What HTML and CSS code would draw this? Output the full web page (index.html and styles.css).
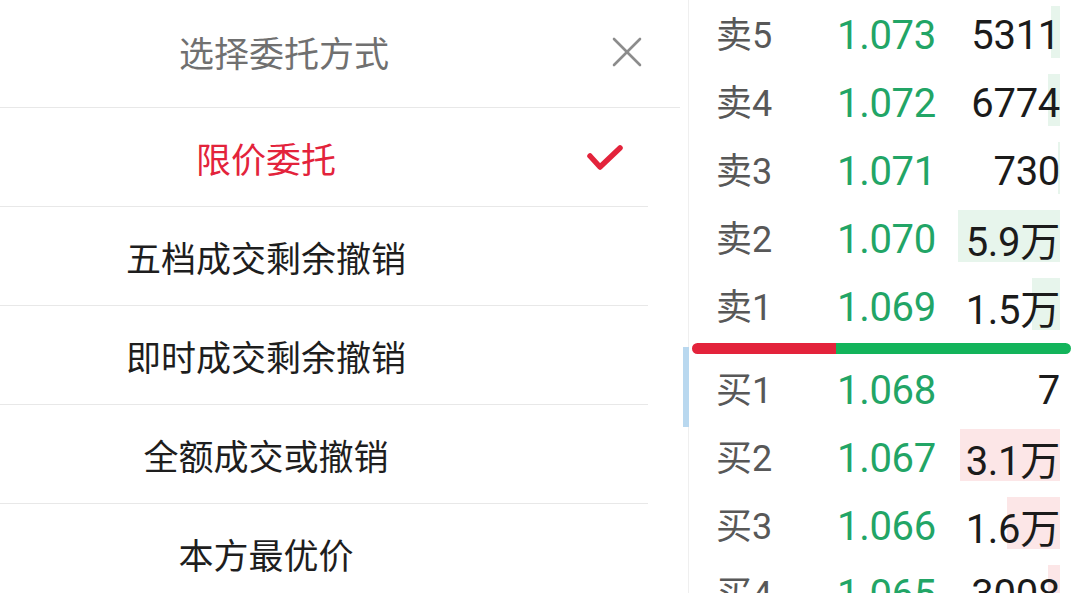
FILE: index.html
```html
<!DOCTYPE html>
<html lang="zh-CN">
<head>
    <meta charset="UTF-8">
    <meta name="viewport" content="width=device-width, initial-scale=1.0">
    <title>选择委托方式</title>
    <link rel="stylesheet" href="styles.css">
</head>
<body>
    <div class="screen">
        <!-- order type picker -->
        <section class="sheet">
            <header class="sheet-head">
                <h2 class="sheet-title">选择委托方式</h2>
                <button class="close-btn" aria-label="关闭">
                    <svg width="30" height="30" viewBox="0 0 30 30" fill="none" stroke="currentColor" stroke-width="2.6" stroke-linecap="round">
                        <line x1="2" y1="2" x2="28" y2="28"></line>
                        <line x1="28" y1="2" x2="2" y2="28"></line>
                    </svg>
                </button>
            </header>
            <ul class="options">
                <li class="option active">
                    <span>限价委托</span>
                    <svg class="check" width="38" height="30" viewBox="0 0 38 30" fill="none" stroke="currentColor" stroke-width="5.5" stroke-linecap="round" stroke-linejoin="round">
                        <polyline points="4,13 14,24 34,5"></polyline>
                    </svg>
                </li>
                <li class="option"><span>五档成交剩余撤销</span></li>
                <li class="option"><span>即时成交剩余撤销</span></li>
                <li class="option"><span>全额成交或撤销</span></li>
                <li class="option"><span>本方最优价</span></li>
            </ul>
        </section>

        <!-- five level quotes -->
        <section class="book">
            <div class="side sell">
                <div class="level"><i class="depth" style="width:9px"></i><span class="lbl">卖5</span><span class="price">1.073</span><span class="vol">5311</span></div>
                <div class="level"><i class="depth" style="width:12px"></i><span class="lbl">卖4</span><span class="price">1.072</span><span class="vol">6774</span></div>
                <div class="level"><i class="depth" style="width:2px"></i><span class="lbl">卖3</span><span class="price">1.071</span><span class="vol">730</span></div>
                <div class="level"><i class="depth" style="width:102px"></i><span class="lbl">卖2</span><span class="price">1.070</span><span class="vol">5.9万</span></div>
                <div class="level"><i class="depth" style="width:28px"></i><span class="lbl">卖1</span><span class="price">1.069</span><span class="vol">1.5万</span></div>
            </div>
            <div class="ratio">
                <div class="ratio-bar">
                    <span class="ratio-sell" style="width:38%"></span>
                    <span class="ratio-buy"></span>
                </div>
            </div>
            <div class="side buy">
                <div class="level"><i class="depth" style="width:0px"></i><span class="lbl">买1</span><span class="price">1.068</span><span class="vol">7</span></div>
                <div class="level"><i class="depth" style="width:100px"></i><span class="lbl">买2</span><span class="price">1.067</span><span class="vol">3.1万</span></div>
                <div class="level"><i class="depth" style="width:53px"></i><span class="lbl">买3</span><span class="price">1.066</span><span class="vol">1.6万</span></div>
                <div class="level"><i class="depth" style="width:12px"></i><span class="lbl">买4</span><span class="price">1.065</span><span class="vol">3008</span></div>
            </div>
            <span class="scroll-hint"></span>
        </section>
    </div>
</body>
</html>
```

FILE: styles.css
```css
:root {
    --red: #e3233b;
    --green: #13b45b;
    --price-green: #22a566;
    --line: #e8e8e8;
}

* {
    margin: 0;
    padding: 0;
    box-sizing: border-box;
}

body {
    font-family: Roboto, "Noto Sans CJK SC", sans-serif;
    background-color: #fff;
    color: #1d1d1d;
}

.screen {
    display: flex;
    width: 1080px;
    height: 593px;
    overflow: hidden;
    background-color: #fff;
}

/* picker */
.sheet {
    flex: none;
    width: 689px;
    border-right: 1px solid #efefef;
    font-family: "Noto Sans CJK SC", sans-serif;
}

.sheet-head {
    display: grid;
    grid-template-columns: 1fr 112px;
    align-items: center;
    width: 680px;
    height: 108px;
    border-bottom: 1px solid var(--line);
}

.sheet-title {
    text-align: center;
    font-size: 35px;
    font-weight: 400;
    color: #707070;
    padding-bottom: 5px;
}

.close-btn {
    justify-self: center;
    margin-left: 6px;
    margin-bottom: 4px;
    border: none;
    background: none;
    color: #8c8c8c;
    display: flex;
}

.options {
    list-style: none;
}

.option {
    display: grid;
    grid-template-columns: 1fr 116px;
    align-items: center;
    width: 648px;
    height: 99px;
    border-bottom: 1px solid var(--line);
    font-size: 35px;
    color: #1e1e1e;
}

.option span {
    grid-column: 1;
    text-align: center;
}

.option.active {
    color: var(--red);
}

.check {
    justify-self: end;
    margin-right: 24px;
    margin-top: 2px;
    color: var(--red);
}

/* quotes */
.book {
    position: relative;
    flex: 1;
    padding-top: 1px;
}

.level {
    position: relative;
    display: grid;
    grid-template-columns: 121px 1fr auto;
    align-items: center;
    height: 68px;
    padding: 0 20px 0 27px;
}

.level span {
    position: relative;
}

.lbl {
    font-size: 36px;
    color: #585858;
    top: -3px;
}

.price {
    font-size: 40px;
    color: var(--price-green);
    letter-spacing: -0.3px;
}

.vol {
    font-size: 40px;
    color: #1b1b1b;
    letter-spacing: -0.3px;
}

.depth {
    position: absolute;
    right: 20px;
    top: 5px;
    height: 52px;
}

.sell .depth {
    background-color: #e7f5ec;
}

.buy .depth {
    background-color: #fce6e7;
}

.ratio {
    display: flex;
    align-items: center;
    height: 15px;
    padding: 0 9px 0 3px;
}

.ratio-bar {
    display: flex;
    flex: 1;
    height: 11px;
    border-radius: 6px;
    overflow: hidden;
}

.ratio-sell {
    background-color: var(--red);
}

.ratio-buy {
    flex: 1;
    background-color: var(--green);
}

.scroll-hint {
    position: absolute;
    left: -6px;
    top: 347px;
    width: 6px;
    height: 80px;
    background-color: #b9d8ef;
}
```
